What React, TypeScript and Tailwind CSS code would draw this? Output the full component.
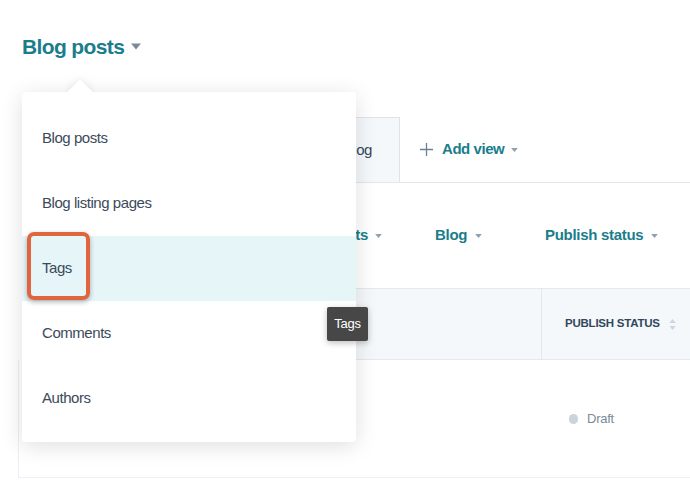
import React from 'react';

const font = { fontFamily: "'Liberation Sans', Arial, sans-serif" };

function Caret({ className = '' }: { className?: string }) {
  return (
    <svg viewBox="0 0 10 6" className={className} fill="currentColor">
      <path d="M0 0 L10 0 L5 6 Z" />
    </svg>
  );
}

const menuItems = ['Blog posts', 'Blog listing pages', 'Tags', 'Comments', 'Authors'];

export default function App() {
  return (
    <div className="relative w-[690px] h-[490px] overflow-hidden bg-white" style={font}>
      {/* page behind the menu */}
      <header className="h-[92px] flex items-center pl-[22px]">
        <h1 className="text-[21px] font-bold text-[#1a7d8b] tracking-[-0.03em] leading-none">Blog posts</h1>
        <Caret className="w-[10px] h-[7px] ml-[7px] mt-[1px] text-[#7c8a99]" />
      </header>

      <div className="ml-[22px] h-[91px] pt-[25px] flex items-stretch border-b border-[#e3e8ee]">
        <div className="w-[378px] bg-[#f5f8fa] border border-b-0 border-[#dfe3eb] flex items-center justify-end pr-[27px] text-[15px] tracking-[-0.03em] text-[#33475b]">
          Blog
        </div>
        <div className="flex items-center ml-[20px] text-[#1a7d8b]">
          <svg viewBox="0 0 14 14" className="w-[13px] h-[13px] text-[#6b8198]" stroke="currentColor" strokeWidth="1.4">
            <path d="M7 0 V14 M0 7 H14" />
          </svg>
          <span className="ml-[9px] text-[15px] font-bold tracking-[-0.03em]">Add view</span>
          <Caret className="w-[7px] h-[4px] ml-[7px] text-[#8fa0b2]" />
        </div>
      </div>

      <div className="ml-[18px] h-[105px] flex items-center text-[15px] font-bold tracking-[-0.02em] text-[#1a7d8b]">
        <div className="w-[417px] flex items-center justify-end pr-[53px]">
          <span>Posts</span>
          <Caret className="w-[7px] h-[4px] ml-[7px] text-[#8fa0b2]" />
        </div>
        <div className="w-[110px] flex items-center">
          <span>Blog</span>
          <Caret className="w-[7px] h-[4px] ml-[8px] text-[#8fa0b2]" />
        </div>
        <div className="flex items-center">
          <span>Publish status</span>
          <Caret className="w-[7px] h-[4px] ml-[8px] text-[#8fa0b2]" />
        </div>
      </div>

      <div className="ml-[18px]">
        <div className="ml-[4px] h-[72px] flex bg-[#f5f8fa] border-y border-[#e3e8ee]">
          <div className="w-[520px] border-r border-[#e3e8ee]" />
          <div className="flex items-center pl-[23px]">
            <span className="whitespace-nowrap text-[11.5px] font-bold uppercase tracking-[-0.02em] text-[#33475b]">Publish status</span>
            <div className="ml-[9px] flex flex-col gap-[3px] text-[#cbd6e2]">
              <svg viewBox="0 0 8 5" className="w-[7px] h-[4px]" fill="currentColor"><path d="M0 5 L8 5 L4 0 Z" /></svg>
              <svg viewBox="0 0 8 5" className="w-[7px] h-[4px]" fill="currentColor"><path d="M0 0 L8 0 L4 5 Z" /></svg>
            </div>
          </div>
        </div>
        <div className="h-[118px] flex border-l border-b border-[#eaf0f6]">
          <div className="w-[523px]" />
          <div className="flex items-center pl-[27px]">
            <span className="w-[9px] h-[10px] rounded-full bg-[#cbd3dc]" />
            <span className="ml-[9px] text-[13px] tracking-[-0.02em] text-[#7c8a99]">Draft</span>
          </div>
        </div>
      </div>

      {/* dropdown menu */}
      <div className="absolute left-[22px] top-[92px] w-[334px] h-[350px] rounded-[4px] shadow-[0_4px_22px_rgba(0,0,0,0.13)]">
        <div className="absolute left-[49px] top-[-9px] w-[18px] h-[18px] rotate-45 bg-white shadow-[0_0_8px_rgba(0,0,0,0.1)]" />
        <div className="absolute inset-0 rounded-[4px] bg-white pt-[14px]">
          {menuItems.map((item) => (
            <div
              key={item}
              className={`relative h-[65px] flex items-center pl-[20px] text-[15px] tracking-[-0.03em] text-[#3b4a5a] ${item === 'Tags' ? 'bg-[#e5f5f8]' : ''}`}
            >
              {item}
              {item === 'Tags' && (
                <div className="absolute left-[5px] top-[-4px] w-[63px] h-[68px] rounded-[7px] border-[4px] border-[#e0653f] shadow-[0_2px_5px_rgba(0,0,0,0.3)]" />
              )}
            </div>
          ))}
        </div>
      </div>

      {/* tooltip */}
      <div className="absolute left-[327px] top-[307px] w-[41px] h-[34px] flex items-center justify-center rounded-[2px] bg-[#474747] text-[13px] tracking-[-0.02em] text-white shadow-[0_2px_6px_rgba(0,0,0,0.25)]">
        Tags
      </div>
    </div>
  );
}
